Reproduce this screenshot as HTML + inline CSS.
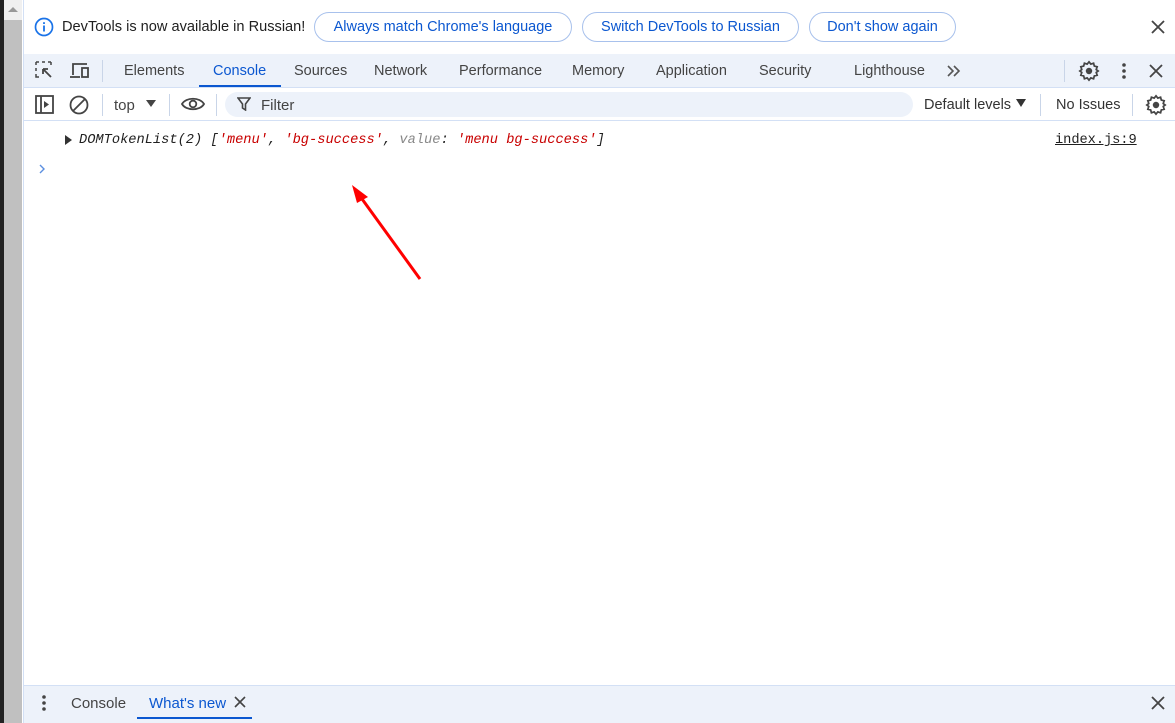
<!DOCTYPE html>
<html><head><style>
*{margin:0;padding:0;box-sizing:border-box}
body{width:1175px;height:723px;overflow:hidden;background:#fff;font-family:"Liberation Sans",sans-serif;font-size:14px;color:#1f1f1f;position:relative}
.abs{position:absolute}
.btn{position:absolute;top:12px;height:30px;border:1px solid #a8c1ec;border-radius:15px;color:#0b57d0;font-size:14.5px;line-height:29px;text-align:center}
.tab{position:absolute;top:63px;font-size:14.5px;color:#444}
.mono{font-family:"Liberation Mono",monospace;font-size:13.7px}
</style></head><body>
<div class="abs" style="left:0;top:0;width:4px;height:723px;background:#222"></div>
<div class="abs" style="left:4px;top:0;width:18px;height:723px;background:#c0c0c0"></div>
<div class="abs" style="left:4px;top:0;width:18px;height:20px;background:#f0f0f0"></div>
<div class="abs" style="left:8px;top:7px;width:0;height:0;border-left:5px solid transparent;border-right:5px solid transparent;border-bottom:5px solid #999"></div>
<div class="abs" style="left:23px;top:0;width:1px;height:723px;background:#d3e0f5"></div>
<svg class="abs" style="left:34px;top:17px" width="20" height="20" viewBox="0 0 20 20"><circle cx="10" cy="10" r="8.5" fill="none" stroke="#1a73e8" stroke-width="1.7"/><rect x="9.1" y="8.5" width="1.8" height="6" fill="#1a73e8"/><rect x="9.1" y="5.2" width="1.8" height="1.8" fill="#1a73e8"/></svg>
<div class="abs" style="left:62px;top:19px;font-size:14.6px">DevTools is now available in Russian!</div>
<div class="btn" style="left:314px;width:258px">Always match Chrome's language</div>
<div class="btn" style="left:582px;width:217px">Switch DevTools to Russian</div>
<div class="btn" style="left:809px;width:147px">Don't show again</div>
<svg class="abs" style="left:1151px;top:20px" width="14" height="14"><path d="M1 1L13 13M13 1L1 13" stroke="#444" stroke-width="1.8"/></svg>
<div class="abs" style="left:24px;top:54px;width:1151px;height:34px;background:#edf2fa;border-bottom:1px solid #d3e0f5"></div>
<svg class="abs" style="left:35px;top:61px" width="20" height="20"><path d="M1 1h3M7 1h3M13 1h3M1 1v3M1 7v3M1 13v3h3M16 1v3" stroke="#444" stroke-width="1.5" fill="none"/><path d="M8 8l8 8M8 8h5M8 8v5" stroke="#444" stroke-width="1.8" fill="none"/></svg>
<svg class="abs" style="left:69px;top:61px" width="22" height="20"><path d="M4 14V3h14" stroke="#444" stroke-width="1.8" fill="none"/><path d="M1 16h10" stroke="#444" stroke-width="1.8"/><rect x="13" y="7" width="6" height="9" stroke="#444" stroke-width="1.8" fill="none"/></svg>
<div class="abs" style="left:102px;top:60px;width:1px;height:22px;background:#c9d5e8"></div>
<div class="tab" style="left:124px">Elements</div>
<div class="tab" style="left:213px;color:#0b57d0">Console</div>
<div class="abs" style="left:199px;top:85px;width:82px;height:2px;background:#0b57d0"></div>
<div class="tab" style="left:294px">Sources</div>
<div class="tab" style="left:374px">Network</div>
<div class="tab" style="left:459px">Performance</div>
<div class="tab" style="left:572px">Memory</div>
<div class="tab" style="left:656px">Application</div>
<div class="tab" style="left:759px">Security</div>
<div class="tab" style="left:854px">Lighthouse</div>
<svg class="abs" style="left:946px;top:64px" width="16" height="14"><path d="M2 2l5 5-5 5M8 2l5 5-5 5" stroke="#555" stroke-width="1.6" fill="none"/></svg>
<div class="abs" style="left:1064px;top:60px;width:1px;height:22px;background:#c9d5e8"></div>
<svg class="abs" style="left:1078px;top:60px" width="22" height="22" viewBox="0 0 24 24"><path d="M12 2l2 2.5 3-1 .8 3.1 3.1.8-1 3L22 12l-2.1 1.6 1 3-3.1.8-.8 3.1-3-1L12 22l-2-2.5-3 1-.8-3.1-3.1-.8 1-3L2 12l2.1-1.6-1-3 3.1-.8.8-3.1 3 1z" fill="none" stroke="#444" stroke-width="1.9"/><circle cx="12" cy="12" r="3.5" fill="#444"/></svg>
<svg class="abs" style="left:1121px;top:62px" width="6" height="18"><circle cx="3" cy="3" r="1.8" fill="#444"/><circle cx="3" cy="9" r="1.8" fill="#444"/><circle cx="3" cy="15" r="1.8" fill="#444"/></svg>
<svg class="abs" style="left:1149px;top:64px" width="14" height="14"><path d="M1 1L13 13M13 1L1 13" stroke="#444" stroke-width="1.8"/></svg>
<div class="abs" style="left:24px;top:120px;width:1151px;height:1px;background:#d3e0f5"></div>
<svg class="abs" style="left:35px;top:95px" width="19" height="19"><rect x="1" y="1" width="17" height="17" stroke="#444" stroke-width="1.8" fill="none"/><path d="M6 1v17" stroke="#444" stroke-width="1.8"/><path d="M9 6l5 3.5-5 3.5z" fill="#444"/></svg>
<svg class="abs" style="left:69px;top:95px" width="20" height="20"><circle cx="10" cy="10" r="8.5" stroke="#444" stroke-width="1.8" fill="none"/><path d="M4 16L16 4" stroke="#444" stroke-width="1.8"/></svg>
<div class="abs" style="left:102px;top:94px;width:1px;height:22px;background:#c9d5e8"></div>
<div class="abs" style="left:114px;top:97px;font-size:15px;color:#444">top</div>
<div class="abs" style="left:146px;top:100px;border-left:5px solid transparent;border-right:5px solid transparent;border-top:7px solid #444"></div>
<div class="abs" style="left:169px;top:94px;width:1px;height:22px;background:#c9d5e8"></div>
<svg class="abs" style="left:181px;top:96px" width="24" height="16"><path d="M1 8C5 1 19 1 23 8C19 15 5 15 1 8z" stroke="#444" stroke-width="1.8" fill="none"/><circle cx="12" cy="8" r="3.3" stroke="#444" stroke-width="1.8" fill="none"/></svg>
<div class="abs" style="left:216px;top:94px;width:1px;height:22px;background:#c9d5e8"></div>
<div class="abs" style="left:225px;top:92px;width:688px;height:25px;background:#edf2fa;border-radius:13px"></div>
<svg class="abs" style="left:237px;top:97px" width="14" height="14"><path d="M1 1h12L8.5 7v6l-3-2V7z" stroke="#444" stroke-width="1.6" fill="none"/></svg>
<div class="abs" style="left:261px;top:97px;font-size:15px;color:#444">Filter</div>
<div class="abs" style="left:924px;top:97px;color:#333;font-size:14.5px">Default levels</div>
<div class="abs" style="left:1016px;top:99px;border-left:5px solid transparent;border-right:5px solid transparent;border-top:8px solid #333"></div>
<div class="abs" style="left:1040px;top:94px;width:1px;height:22px;background:#c9d5e8"></div>
<div class="abs" style="left:1056px;top:97px;color:#333;font-size:14.5px">No Issues</div>
<div class="abs" style="left:1132px;top:94px;width:1px;height:22px;background:#c9d5e8"></div>
<svg class="abs" style="left:1145px;top:94px" width="22" height="22" viewBox="0 0 24 24"><path d="M12 2l2 2.5 3-1 .8 3.1 3.1.8-1 3L22 12l-2.1 1.6 1 3-3.1.8-.8 3.1-3-1L12 22l-2-2.5-3 1-.8-3.1-3.1-.8 1-3L2 12l2.1-1.6-1-3 3.1-.8.8-3.1 3 1z" fill="none" stroke="#444" stroke-width="1.9"/><circle cx="12" cy="12" r="3.5" fill="#444"/></svg>
<div class="abs" style="left:65px;top:135px;border-top:5px solid transparent;border-bottom:5px solid transparent;border-left:7px solid #333"></div>
<div class="abs mono" style="left:79px;top:133px;font-style:italic;color:#1f1f1f;white-space:pre">DOMTokenList(2) [<span style="color:#c80000">'menu'</span>, <span style="color:#c80000">'bg-success'</span>, <span style="color:#888">value</span>: <span style="color:#c80000">'menu bg-success'</span>]</div>
<div class="abs mono" style="left:1055px;top:133px;text-decoration:underline;color:#1f1f1f;letter-spacing:-0.05px">index.js:9</div>
<svg class="abs" style="left:38px;top:163px" width="8" height="12"><path d="M2 2l4 4-4 4" stroke="#5b8fe0" stroke-width="1.4" fill="none"/></svg>
<svg class="abs" style="left:340px;top:175px" width="90" height="110"><path d="M80 104L17 17" stroke="#f00" stroke-width="3"/><path d="M12 10L28 22L17 28z" fill="#f00"/></svg>
<div class="abs" style="left:24px;top:685px;width:1151px;height:38px;background:#edf2fa;border-top:1px solid #d3e0f5"></div>
<svg class="abs" style="left:41px;top:694px" width="6" height="18"><circle cx="3" cy="3" r="1.8" fill="#444"/><circle cx="3" cy="9" r="1.8" fill="#444"/><circle cx="3" cy="15" r="1.8" fill="#444"/></svg>
<div class="abs" style="left:71px;top:695px;color:#444;font-size:15px">Console</div>
<div class="abs" style="left:149px;top:695px;color:#0b57d0;font-size:15px">What's new</div>
<svg class="abs" style="left:234px;top:696px" width="12" height="12"><path d="M1 1L11 11M11 1L1 11" stroke="#444" stroke-width="1.6"/></svg>
<div class="abs" style="left:137px;top:717px;width:115px;height:2px;background:#0b57d0"></div>
<svg class="abs" style="left:1151px;top:696px" width="14" height="14"><path d="M1 1L13 13M13 1L1 13" stroke="#444" stroke-width="1.8"/></svg>
</body></html>
